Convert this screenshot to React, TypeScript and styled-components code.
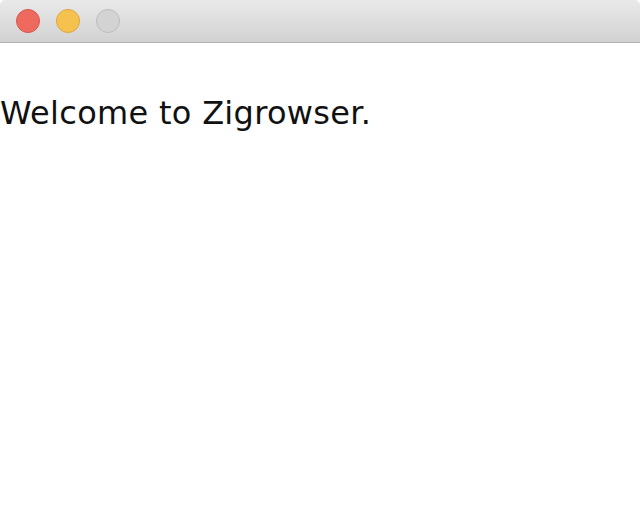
import React from "react";
import styled, { createGlobalStyle } from "styled-components";

const Global = createGlobalStyle`
  html, body { margin: 0; padding: 0; background: #fff; }
  body { font-family: "DejaVu Sans", sans-serif; }
`;

const TitleBar = styled.div`
  height: 42px;
  border-bottom: 1px solid #b4b4b4;
  border-radius: 5px 5px 0 0;
  background: linear-gradient(#e9e9e9, #d2d2d2);
  display: flex;
  align-items: center;
  gap: 16px;
  padding-left: 16px;
`;

const Light = styled.span<{ $fill: string; $edge: string }>`
  width: 24px;
  height: 24px;
  box-sizing: border-box;
  border-radius: 50%;
  background: ${({ $fill }) => $fill};
  border: 1px solid ${({ $edge }) => $edge};
`;

const Body = styled.div`
  padding-top: 51px;
`;

const Welcome = styled.p`
  margin: 0;
  font-size: 32px;
  line-height: 38px;
  letter-spacing: 0.3px;
  color: #111;
`;

export default function App() {
  return (
    <>
      <Global />
      <TitleBar>
        <Light $fill="#ef6a5e" $edge="#d8574c" />
        <Light $fill="#f6c24f" $edge="#dea73a" />
        <Light $fill="#d3d3d3" $edge="#bdbdbd" />
      </TitleBar>
      <Body>
        <Welcome>Welcome to Zigrowser.</Welcome>
      </Body>
    </>
  );
}
